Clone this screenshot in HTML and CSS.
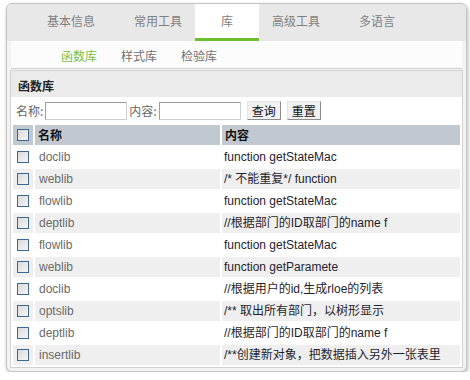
FILE: index.html
```html
<!DOCTYPE html>
<html lang="zh">
<head>
<meta charset="utf-8">
<title>库</title>
<link rel="stylesheet" href="styles.css">
</head>
<body>
<div class="frame">
  <div class="tabs">
    <span class="tab">基本信息</span>
    <span class="tab">常用工具</span>
    <span class="tab active">库</span>
    <span class="tab">高级工具</span>
    <span class="tab">多语言</span>
  </div>
  <div class="subtabs">
    <span class="subtab active">函数库</span>
    <span class="subtab">样式库</span>
    <span class="subtab">检验库</span>
  </div>
  <div class="panel">
    <div class="panel-title">函数库</div>
    <div class="search">
      <label class="lbl">名称:</label><span class="input"></span>
      <label class="lbl lbl-gap">内容:</label><span class="input"></span>
      <span class="btn">查询</span><span class="btn">重置</span>
    </div>
    <table class="grid">
      <colgroup><col class="c-chk"><col class="c-name"><col class="c-content"></colgroup>
      <thead>
        <tr><th><span class="chk"></span></th><th>名称</th><th>内容</th></tr>
      </thead>
      <tbody>
        <tr><td><span class="chk"></span></td><td class="name">doclib</td><td class="content">function getStateMac</td></tr>
        <tr><td><span class="chk"></span></td><td class="name">weblib</td><td class="content">/* 不能重复*/ function</td></tr>
        <tr><td><span class="chk"></span></td><td class="name">flowlib</td><td class="content">function getStateMac</td></tr>
        <tr><td><span class="chk"></span></td><td class="name">deptlib</td><td class="content">//根据部门的ID取部门的name f</td></tr>
        <tr><td><span class="chk"></span></td><td class="name">flowlib</td><td class="content">function getStateMac</td></tr>
        <tr><td><span class="chk"></span></td><td class="name">weblib</td><td class="content">function getParamete</td></tr>
        <tr><td><span class="chk"></span></td><td class="name">doclib</td><td class="content">//根据用户的id,生成rloe的列表</td></tr>
        <tr><td><span class="chk"></span></td><td class="name">optslib</td><td class="content">/** 取出所有部门，以树形显示</td></tr>
        <tr><td><span class="chk"></span></td><td class="name">deptlib</td><td class="content">//根据部门的ID取部门的name f</td></tr>
        <tr><td><span class="chk"></span></td><td class="name">insertlib</td><td class="content">/**创建新对象，把数据插入另外一张表里</td></tr>
      </tbody>
    </table>
  </div>
</div>
</body>
</html>
```

FILE: styles.css
```css
* { box-sizing: border-box; }
html, body { margin: 0; padding: 0; background: #fff; }
body {
  font-family: "Liberation Sans", "Noto Sans CJK SC", sans-serif;
  font-size: 12px;
  color: #333;
}
.frame {
  margin: 3px 0 0 6px;
  width: 461px;
  border: 1px solid #c4c4c4;
  border-radius: 6px;
  background: #f3f3f3;
  padding: 0 3px 3px;
  box-shadow: 1px 2px 4px rgba(0, 0, 0, 0.28);
  overflow: hidden;
}
.tabs {
  display: flex;
  gap: 39px;
  height: 37px;
  margin: 0 -3px;
  padding-left: 40px;
  background: #e8e8e8;
  border-radius: 5px 5px 0 0;
}
.tab {
  line-height: 34px;
  border-bottom: 3px solid transparent;
  color: #808080;
  font-family: "Noto Sans CJK SC", sans-serif;
  font-size: 12px;
  white-space: nowrap;
}
.tab.active {
  padding: 0 26px;
  margin: 0 -26px;
  background: #fff;
  border-bottom-color: #6cc02c;
}
.subtabs {
  display: flex;
  gap: 24px;
  height: 28px;
  padding: 2px 0 0 50px;
  margin: 0 1px;
  background: #fcfcfc;
  border-bottom: 1px solid #cfcfcf;
}
.subtab {
  line-height: 25px;
  color: #707070;
  font-family: "Noto Sans CJK SC", sans-serif;
}
.subtab.active { color: #78c043; }
.panel {
  margin-top: 1px;
  background: #fff;
  border: 1px solid #d2d2d2;
}
.panel-title {
  height: 26px;
  padding: 3px 0 0 7px;
  line-height: 23px;
  font-weight: bold;
  color: #222;
  background: #ebebeb;
  font-family: "Noto Sans CJK SC", sans-serif;
}
.search {
  display: flex;
  align-items: center;
  height: 26px;
  padding: 1px 0 0 5px;
}
.lbl {
  color: #666;
  font-family: "Noto Sans CJK SC", sans-serif;
  margin-right: 2px;
}
.lbl-gap { margin-left: 2px; }
.input {
  width: 82px;
  height: 18px;
  border: 1px solid #9e9e9e;
  border-right-color: #cfcfcf;
  border-bottom-color: #cfcfcf;
  background: #fff;
}
.btn {
  height: 19px;
  padding: 0 4px;
  margin-left: 6px;
  line-height: 17px;
  color: #111;
  background: #f1f1f1;
  border: 1px solid #e6e6e6;
  border-right-color: #8d8d8d;
  border-bottom-color: #8d8d8d;
  font-family: "Noto Sans CJK SC", sans-serif;
}
.grid {
  width: 451px;
  table-layout: fixed;
  border-collapse: separate;
  border-spacing: 2px;
}
.c-chk { width: 20px; }
.c-name { width: 185px; }
.c-content { width: 238px; }
.grid th, .grid td {
  height: 20px;
  padding: 0 0 0 3px;
  line-height: 20px;
  text-align: left;
  white-space: nowrap;
  overflow: hidden;
}
.grid th {
  background: #c1c8d0;
  font-weight: bold;
  color: #111;
  font-family: "Noto Sans CJK SC", sans-serif;
}
.grid th:first-child, .grid td:first-child { padding: 0; }
.grid tbody tr:nth-child(even) td { background: #efefef; }
.name { color: #6a6a6a; padding-left: 4px !important; }
.content { color: #1e1e2e; padding-left: 2px !important; }
.chk {
  display: block;
  width: 12px;
  height: 12px;
  margin: 0 auto 0 4px;
  border: 1px solid #3d6690;
  background: linear-gradient(135deg, #d9d9d9, #f6f6f6);
}
```
